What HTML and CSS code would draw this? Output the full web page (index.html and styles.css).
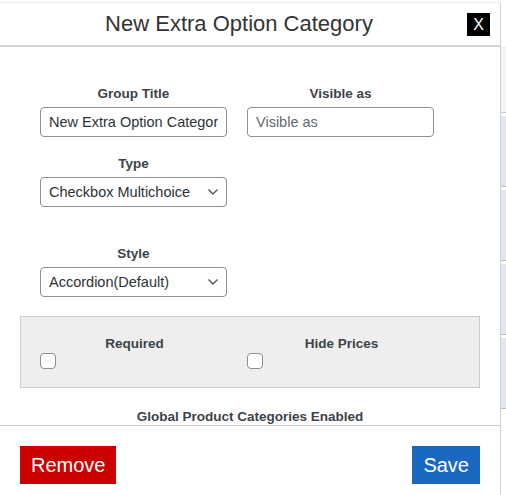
FILE: index.html
```html
<!DOCTYPE html>
<html lang="en">
<head>
  <meta charset="UTF-8">
  <title>New Extra Option Category</title>
  <link rel="stylesheet" href="styles.css">
</head>
<body>

<div class="backdrop">
  <div class="modal">
    <div class="modal-header">
      <h2>New Extra Option Category</h2>
      <button class="close-btn">X</button>
    </div>

    <div class="modal-body">
      <div class="field-grid">
        <div class="field">
          <label>Group Title</label>
          <input type="text" value="New Extra Option Category">
        </div>
        <div class="field">
          <label>Visible as</label>
          <input type="text" placeholder="Visible as">
        </div>
      </div>

      <div class="field-grid">
        <div class="field">
          <label>Type</label>
          <div class="select-wrap">
            <select>
              <option>Checkbox Multichoice</option>
            </select>
            <svg class="chevron" width="12" height="8" viewBox="0 0 12 8"><path d="M1.5 1.5 L6 6 L10.5 1.5" fill="none" stroke="#50575e" stroke-width="1.4"/></svg>
          </div>
        </div>
      </div>

      <div class="field-grid style-row">
        <div class="field">
          <label>Style</label>
          <div class="select-wrap">
            <select>
              <option>Accordion(Default)</option>
            </select>
            <svg class="chevron" width="12" height="8" viewBox="0 0 12 8"><path d="M1.5 1.5 L6 6 L10.5 1.5" fill="none" stroke="#50575e" stroke-width="1.4"/></svg>
          </div>
        </div>
      </div>

      <div class="options-box field-grid">
        <div class="field check-field">
          <label>Required</label>
          <input type="checkbox">
        </div>
        <div class="field check-field">
          <label>Hide Prices</label>
          <input type="checkbox">
        </div>
      </div>

      <div class="section-title">Global Product Categories Enabled</div>
    </div>

    <div class="modal-footer">
      <button class="btn btn-remove">Remove</button>
      <button class="btn btn-save">Save</button>
    </div>
  </div>
  <div class="page-behind">
    <div class="row"></div>
    <div class="row"></div>
    <div class="row"></div>
    <div class="row"></div>
    <div class="row"></div>
  </div>
</div>

</body>
</html>
```

FILE: styles.css
```css
body {
  margin: 0;
  padding: 0;
  background: #fff;
  font-family: "Liberation Sans", Arial, sans-serif;
  color: #3c434a;
  overflow: hidden;
}
.backdrop {
  display: flex;
  height: 495px;
}
.modal {
  width: 500px;
  height: 493px;
  margin-top: 2px;
  background: #fff;
  border-top: 1px solid #eee;
  border-right: 1px solid #d0d0d0;
  display: flex;
  flex-direction: column;
  flex-shrink: 0;
}
.page-behind {
  flex: 1;
  padding-top: 46px;
  background: #fff;
}
.page-behind .row {
  height: 70px;
  margin-top: 3px;
  background: #e2e6ee;
  border-bottom: 1px solid #b8bcc4;
}
.page-behind .row:first-child {
  margin-top: 0;
  height: 66px;
  background: #f3f4f6;
  border-bottom: 1px solid #c4c8d0;
}

/* Header */
.modal-header {
  height: 42px;
  display: flex;
  align-items: center;
  justify-content: center;
  position: relative;
  border-bottom: 2px solid #d4d4d4;
}
.modal-header h2 {
  margin: 0 22px 0 0;
  font-size: 22px;
  font-weight: normal;
  color: #333;
}
.close-btn {
  position: absolute;
  right: 10px;
  top: 10px;
  width: 23px;
  height: 23px;
  padding: 0;
  border: none;
  background: #000;
  color: #fff;
  font-family: "Liberation Sans", Arial, sans-serif;
  font-size: 16px;
  line-height: 23px;
}

/* Body */
.modal-body {
  flex: 1;
  overflow: hidden;
  padding: 38px 20px 0;
}
.field-grid {
  display: grid;
  grid-template-columns: 187px 187px;
  column-gap: 20px;
  padding: 0 20px;
}
.field {
  display: flex;
  flex-direction: column;
  align-items: stretch;
}
.field label {
  font-size: 13.5px;
  font-weight: bold;
  text-align: center;
  line-height: 18px;
  margin-bottom: 4px;
}
.field input[type="text"],
.field select {
  box-sizing: border-box;
  height: 30px;
  width: 187px;
  border: 1px solid #8c8f94;
  border-radius: 4px;
  padding: 0 8px;
  font-family: "Liberation Sans", Arial, sans-serif;
  font-size: 14.5px;
  color: #2c3338;
  background: #fff;
}
.field input::placeholder {
  color: #646970;
}
.field-grid + .field-grid {
  margin-top: 18px;
}
.field-grid.style-row {
  margin-top: 38px;
}
.select-wrap {
  position: relative;
}
.select-wrap select {
  appearance: none;
  -webkit-appearance: none;
}
.chevron {
  position: absolute;
  right: 8px;
  top: 11px;
  pointer-events: none;
}

/* Required / Hide Prices */
.field-grid.options-box {
  margin-top: 19px;
  height: 70px;
  box-sizing: content-box;
  background: #eee;
  border: 1px solid #ccc;
}
.check-field {
  padding-top: 18px;
}
.check-field label {
  margin-bottom: 0;
}
.check-field input[type="checkbox"] {
  appearance: none;
  -webkit-appearance: none;
  width: 16px;
  height: 16px;
  margin: 0 0 0 -1px;
  border: 1px solid #8c8f94;
  border-radius: 4px;
  background: #fff;
}

.section-title {
  margin-top: 21px;
  text-align: center;
  font-size: 13.5px;
  font-weight: bold;
  line-height: 16px;
}

/* Footer */
.modal-footer {
  box-sizing: border-box;
  height: 71px;
  flex-shrink: 0;
  border-top: 1px solid #ccc;
  display: flex;
  justify-content: space-between;
  align-items: flex-start;
  padding: 20px 20px 0;
}
.btn {
  height: 38px;
  border: none;
  color: #fff;
  font-family: "Liberation Sans", Arial, sans-serif;
  font-size: 20px;
  padding: 0 11px;
  cursor: pointer;
}
.btn-remove {
  background: #cc0000;
}
.btn-save {
  background: #1a68c0;
}
```
